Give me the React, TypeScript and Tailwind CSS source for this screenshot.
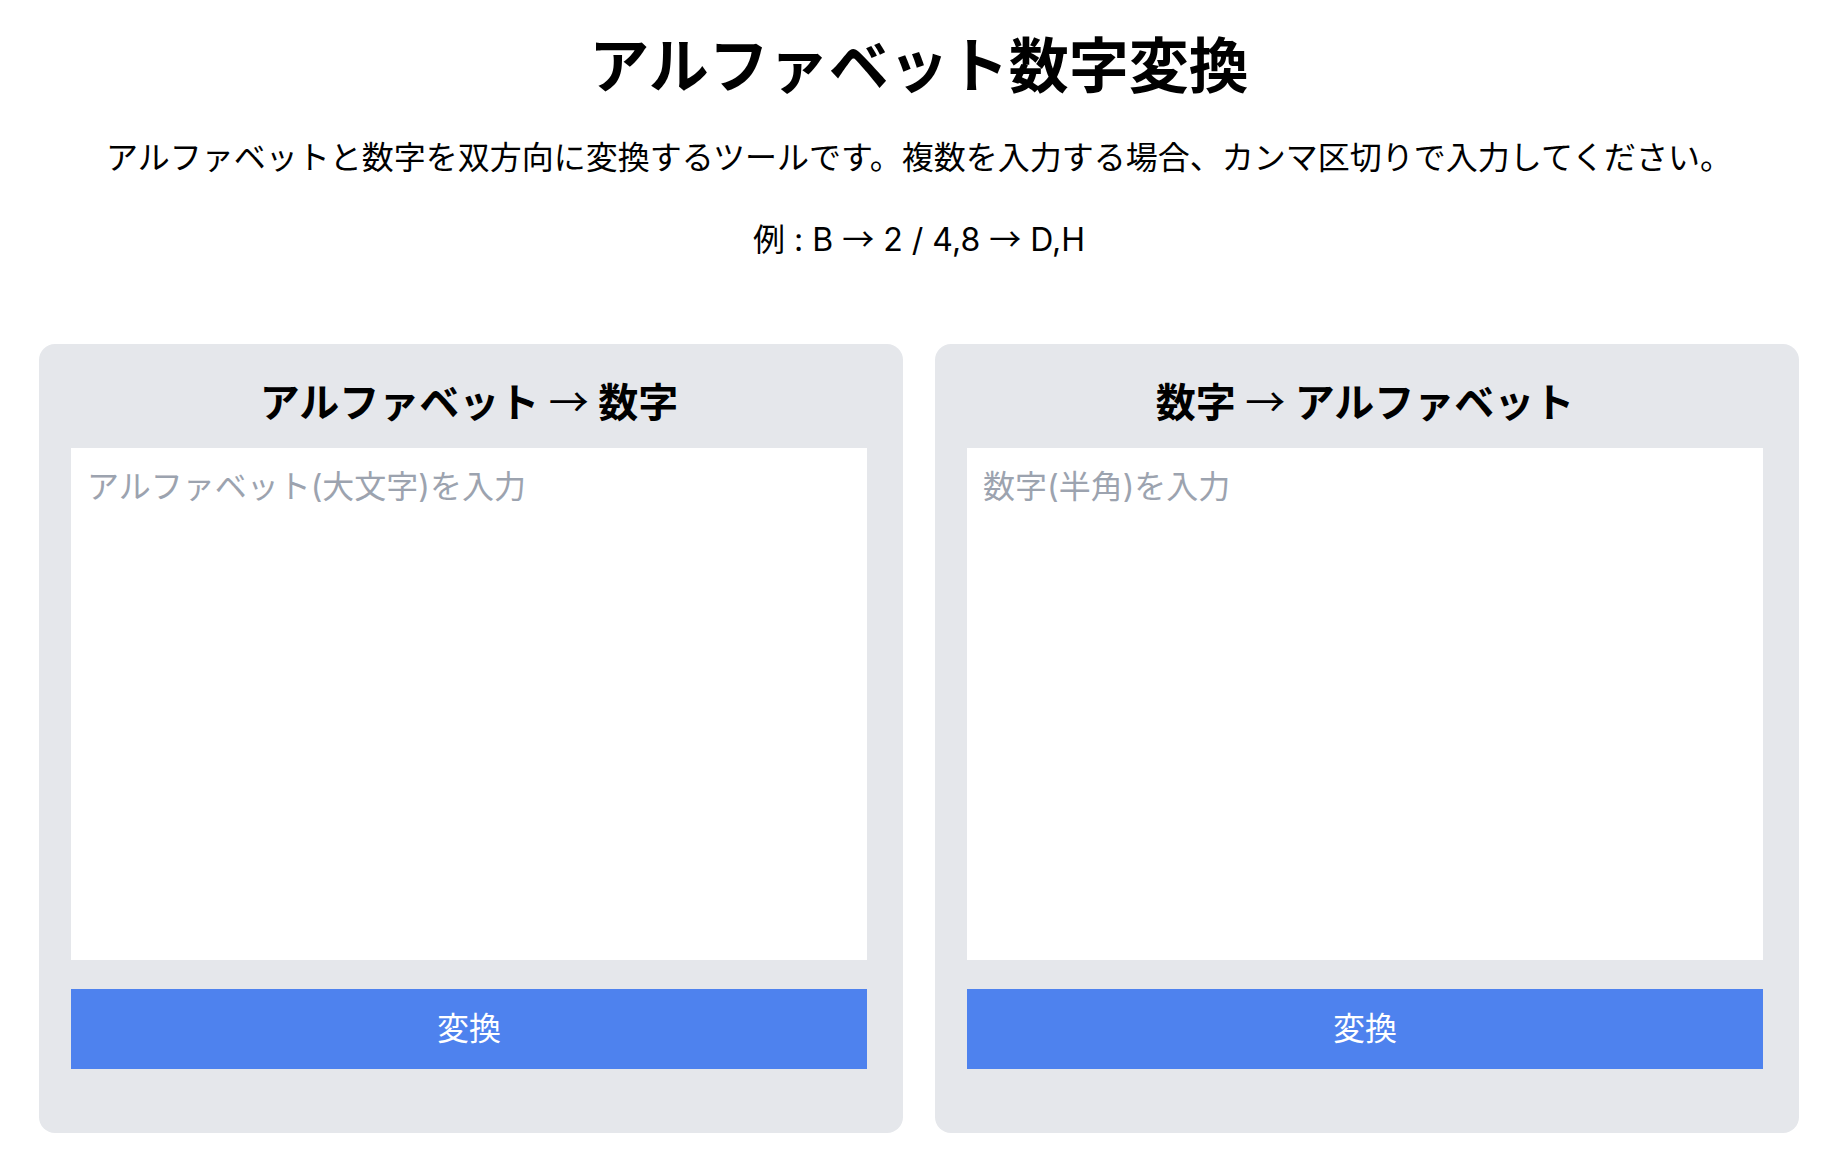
import { useState } from 'react'

const toNumbers = (s: string) =>
  s
    .split(',')
    .map((c) => c.trim())
    .filter(Boolean)
    .map((c) => (/^[A-Z]$/.test(c) ? String(c.charCodeAt(0) - 64) : '?'))
    .join(',')

const toLetters = (s: string) =>
  s
    .split(',')
    .map((c) => c.trim())
    .filter(Boolean)
    .map((c) => {
      const n = Number(c)
      return n >= 1 && n <= 26 ? String.fromCharCode(64 + n) : '?'
    })
    .join(',')

// the long thin arrow comes from the CJK font
const Arrow = () => <span className="font-['Noto_Sans_CJK_JP'] font-normal leading-none">→</span>

interface ConverterCardProps {
  from: string
  to: string
  placeholder: string
  convert: (s: string) => string
}

function ConverterCard({ from, to, placeholder, convert }: ConverterCardProps) {
  const [value, setValue] = useState('')

  return (
    <div className="bg-[#e5e7eb] rounded-2xl pt-8 pl-8 pr-9 pb-16 flex flex-col">
      <h2 className="h-[54px] text-[40px] leading-[54px] font-bold text-black text-center mb-[18px]">
        {from} <Arrow /> {to}
      </h2>
      <textarea
        value={value}
        onChange={(e) => setValue(e.target.value)}
        placeholder={placeholder}
        className="w-full h-[512px] bg-white px-4 py-[15px] text-[32px] leading-[48px] text-black placeholder:text-[#9ca3af] resize-none outline-none"
      />
      <button
        onClick={() => setValue(convert(value))}
        className="mt-[29px] h-[80px] w-full bg-[#4e82ee] text-white text-[32px] leading-[48px]"
      >
        変換
      </button>
    </div>
  )
}

export default function App() {
  return (
    <div
      className="min-h-screen bg-white pl-[39px] pr-[27px] pt-[30px] pb-4 text-black"
      style={{ fontFamily: 'Inter, "Noto Sans CJK JP", sans-serif' }}
    >
      <h1 className="text-[60px] leading-[72px] font-bold text-center">アルファベット数字変換</h1>
      <p className="mt-8 text-[32px] leading-[48px] text-center">
        アルファベットと数字を双方向に変換するツールです。複数を入力する場合、カンマ区切りで入力してください。
      </p>
      <p className="mt-[34px] h-[48px] text-[32px] leading-[48px] text-center">
        例 : B <Arrow /> 2 / 4,8 <Arrow /> D,H
      </p>
      <div className="mt-20 grid grid-cols-2 gap-8">
        <ConverterCard
          from="アルファベット"
          to="数字"
          placeholder="アルファベット(大文字)を入力"
          convert={toNumbers}
        />
        <ConverterCard
          from="数字"
          to="アルファベット"
          placeholder="数字(半角)を入力"
          convert={toLetters}
        />
      </div>
    </div>
  )
}
